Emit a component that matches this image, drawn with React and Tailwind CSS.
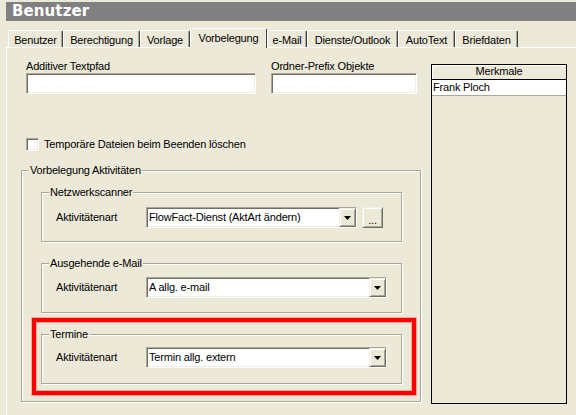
import React from 'react';

const tabs = [
    { label: 'Benutzer', w: 'w-[55px]' },
    { label: 'Berechtigung', w: 'w-[77px]' },
    { label: 'Vorlage', w: 'w-[50px]' },
    { label: 'Vorbelegung', w: 'w-[77px]', active: true },
    { label: 'e-Mail', w: 'w-[40px]' },
    { label: 'Dienste/Outlook', w: 'w-[91px]' },
    { label: 'AutoText', w: 'w-[57px]' },
    { label: 'Briefdaten', w: 'w-[63px]' },
];

const sunken = 'border border-t-[#ACA899] border-l-[#ACA899] border-b-white border-r-white shadow-[inset_1px_1px_0_#716F64,inset_-1px_-1px_0_#F1EFE2]';
const raised = 'border border-t-[#F1EFE2] border-l-[#F1EFE2] border-b-[#716F64] border-r-[#716F64] shadow-[inset_1px_1px_0_#fff,inset_-1px_-1px_0_#ACA899]';
const etched = 'border border-[#ACA899] shadow-[inset_1px_1px_0_#fff,1px_1px_0_#fff]';

const Legend = ({ children }) => (
    <div className="-mt-[7px] ml-[7px] w-fit bg-[#ECE9D8] px-[1px] leading-[13px]">{children}</div>
);

const Combo = ({ value, w }) => (
    <div className={`flex h-[21px] ${w} bg-white ${sunken}`}>
        <div className="flex-1 pl-[2px] pt-[3px] leading-[13px] whitespace-nowrap overflow-hidden">{value}</div>
        <div className={`flex h-full w-[17px] items-center justify-center bg-[#ECE9D8] ${raised}`}>
            <svg width="7" height="4" viewBox="0 0 7 4"><path d="M0 0h7L3.5 4z" fill="#000" /></svg>
        </div>
    </div>
);

const ActivityGroup = ({ title, value, w, extra, mt = 'mt-[14px]' }) => (
    <div className={`ml-[19px] h-[50px] w-[361px] ${etched}`}>
        <Legend>{title}</Legend>
        <div className={`${mt} flex items-center pl-[14px]`}>
            <div className="w-[90px] leading-[13px]">Aktivitätenart</div>
            <Combo value={value} w={w} />
            {extra && (
                <div className={`ml-[5px] flex h-[21px] w-[21px] items-end justify-center pb-[3px] bg-[#ECE9D8] leading-[8px] ${raised}`}>...</div>
            )}
        </div>
    </div>
);

export default function App() {
    return (
        <div className="h-[415px] w-[576px] overflow-hidden bg-[#ECE9D8] pt-[2px] text-[11px] tracking-[-0.18px] text-black font-['Liberation_Sans',Arial,sans-serif]">
            <div className="ml-[6px] h-[19px] bg-[#808080] pl-[6px] text-[15px] font-bold leading-[19px] tracking-[0.1px] text-white font-['DejaVu_Sans',sans-serif]">
                Benutzer
            </div>

            <div className="mt-[7px] flex h-[19px] items-end pl-[8px]">
                {tabs.map((t) => (
                    <div
                        key={t.label}
                        className={`${t.w} rounded-t-[2px] border-l border-t border-r border-l-white border-t-white border-r-[#404040] text-center leading-[13px] whitespace-nowrap ${
                            t.active
                                ? 'relative z-10 -mb-[1px] h-[20px] bg-[#ECE9D8] pt-[3px]'
                                : 'h-[17px] pt-[3px] shadow-[inset_-1px_0_0_#ACA899]'
                        }`}
                    >
                        {t.label}
                    </div>
                ))}
            </div>

            <div className="ml-[6px] flex h-[400px] border-l border-t border-white">
                <div className="w-[424px] pl-[19px] pt-[11px]">
                    <div className="flex gap-[15px]">
                        <div>
                            <div className="leading-[14px]">Additiver Textpfad</div>
                            <div className={`h-[21px] w-[230px] bg-white ${sunken}`} />
                        </div>
                        <div>
                            <div className="leading-[14px]">Ordner-Prefix Objekte</div>
                            <div className={`h-[21px] w-[146px] bg-white ${sunken}`} />
                        </div>
                    </div>

                    <div className="mt-[44px] flex items-center">
                        <div className={`h-[13px] w-[13px] bg-white ${sunken}`} />
                        <span className="ml-[5px] leading-[13px]">Temporäre Dateien beim Beenden löschen</span>
                    </div>

                    <div className={`-ml-[5px] mt-[19px] h-[232px] w-[400px] ${etched}`}>
                        <Legend>Vorbelegung Aktivitäten</Legend>
                        <div className="mt-[15px]">
                            <ActivityGroup title="Netzwerkscanner" value="FlowFact-Dienst (AktArt ändern)" w="w-[211px]" extra mt="mt-[8px]" />
                        </div>
                        <div className="mt-[21px]">
                            <ActivityGroup title="Ausgehende e-Mail" value="A allg. e-mail" w="w-[241px]" mt="mt-[7px]" />
                        </div>
                        <div className="ml-[10px] mt-[5px] h-[77px] w-[384px] border-4 border-[#FF0000] pt-[12px] shadow-[0_0_0_1px_rgba(255,90,90,0.45),inset_0_0_0_1px_rgba(255,90,90,0.45)]">
                            <div className="-ml-[14px]">
                                <ActivityGroup title="Termine" value="Termin allg. extern" w="w-[241px]" mt="mt-[6px]" />
                            </div>
                        </div>
                    </div>
                </div>

                <div className="mt-[16px] flex h-[340px] w-[136px] flex-col border border-black">
                    <div className="h-[15px] border-b border-black text-center leading-[13px] shadow-[inset_1px_1px_0_#fff]">Merkmale</div>
                    <div className="h-[16px] border-b border-[#ACA899] bg-white pl-[1px] leading-[15px]">Frank Ploch</div>
                </div>
            </div>
        </div>
    );
}
